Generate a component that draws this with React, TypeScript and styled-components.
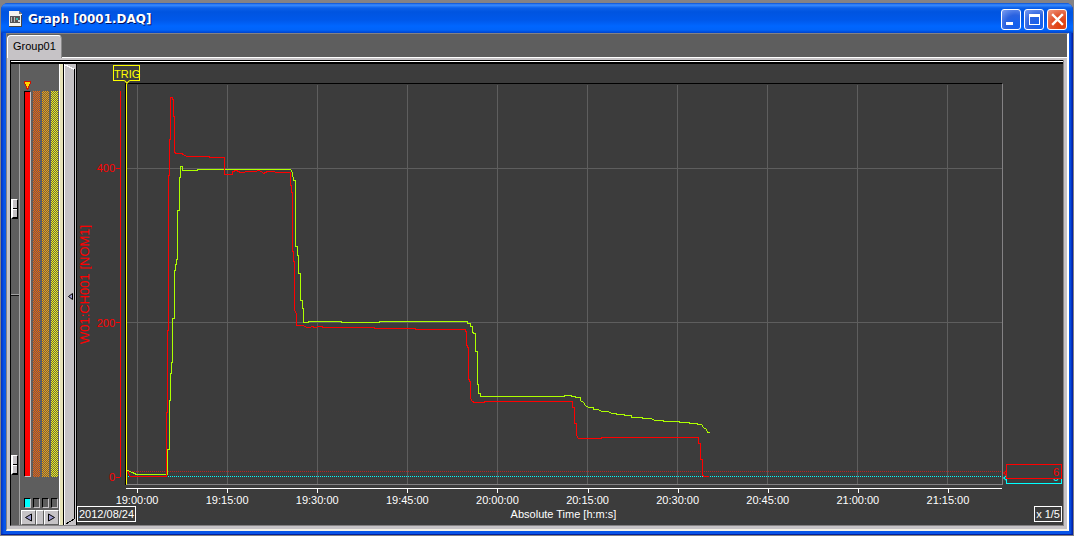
import React from "react";
import styled, { createGlobalStyle } from "styled-components";

const GlobalStyle = createGlobalStyle`
  * { box-sizing: border-box; }
  body {
    margin: 0;
    background: #848284;
    font-family: "Liberation Sans", Arial, sans-serif;
    font-size: 11px;
    line-height: 14px;
  }
  button { font: inherit; padding: 0; cursor: default; }
`;

const Desktop = styled.div`
  min-height: 100vh;
  display: flex;
  padding: 3px 1px 1px 1px;
`;

const Window = styled.main`
  flex: 1;
  min-width: 0;
  display: flex;
  flex-direction: column;
  border-radius: 7px 7px 0 0;
  background: linear-gradient(to right, #0030c0 0, #0855e8 3px, #0855e8 calc(100% - 3px), #0018a0 100%);
  padding: 0 4px 4px 5px;
  box-shadow: inset 0 -1px 0 #0020a0;
`;

const TitleBar = styled.header`
  height: 30px;
  margin: 0 -4px 0 -5px;
  padding: 2px 6px 0 8px;
  border-radius: 7px 7px 0 0;
  display: flex;
  align-items: center;
  gap: 6px;
  background: linear-gradient(#0a50d0 0, #3a8cff 2px, #0a5fe8 5px, #0054e0 9px, #0058ea 17px, #0066ff 23px, #0064fa 27px, #0042c8 30px);
`;

const Title = styled.h1`
  flex: 1;
  margin: 0;
  color: #fff;
  font-family: "DejaVu Sans", Verdana, sans-serif;
  font-size: 12px;
  line-height: 18px;
  font-weight: bold;
  text-shadow: 1px 1px 0 #001060;
  white-space: nowrap;
`;

const WindowButtons = styled.div`
  display: flex;
  gap: 3px;
`;

const WindowButton = styled.button<{ $close?: boolean }>`
  width: 20px;
  height: 21px;
  border: 1px solid #fff;
  border-radius: 3px;
  display: grid;
  place-items: center;
  background: ${(p) =>
    p.$close
      ? "radial-gradient(circle at 75% 80%, #e03c08, #e2542f 50%, #ef9c85)"
      : "radial-gradient(circle at 75% 80%, #1060f0, #2a62e0 50%, #7f9ff0)"};
`;

const Client = styled.section`
  flex: 1;
  min-height: 0;
  display: flex;
  flex-direction: column;
  background: #c6c3c6;
  border: 1px solid #848284;
  border-right: 2px solid #fff;
  border-bottom: 2px solid #f4f2e8;
`;

const TabRow = styled.nav`
  height: 24px;
  display: flex;
  align-items: flex-end;
  background: #5e5e5e;
  border-bottom: 1px solid #fff;
`;

const Tab = styled.button`
  height: 23px;
  width: 55px;
  margin-bottom: -1px;
  border: 1px solid #fff;
  border-width: 1px 1px 0 1px;
  border-right-color: #8a8a8a;
  border-radius: 4px 4px 0 0;
  background: #c6c3c6;
  color: #000;
  text-align: left;
  padding: 0 0 2px 5px;
`;

const Workspace = styled.div`
  flex: 1;
  min-height: 0;
  display: flex;
  margin: 2px 3px 3px 3px;
  border-left: 1px solid #000;
  border-right: 1px solid #848284;
  border-bottom: 1px solid #848284;
  background: linear-gradient(#000 0 1px, #fff 1px 2px, #000 2px 4px, #3c3c3c 4px);
  padding-top: 4px;
`;

const Ruler = styled.div`
  width: 9px;
  display: flex;
  flex-direction: column;
  background: #5e5e5e;
  border-right: 1px solid #a0a0a0;
  padding: 135px 0 50px 0;
`;

const RulerThumb = styled.div`
  width: 7px;
  height: 20px;
  flex: none;
  border: 1px solid #fff;
  border-left-width: 2px;
  border-right-color: #000;
  border-bottom: 2px solid #000;
  background: linear-gradient(#c6c3c6 0 8px, #000 8px 9px, #fff 9px 10px, #c6c3c6 10px);
`;

const RulerSpan = styled.div<{ $grow: number; $mark?: boolean }>`
  flex: ${(p) => p.$grow};
  border-bottom: ${(p) => (p.$mark ? "1px solid #111" : "0")};
  box-shadow: ${(p) => (p.$mark ? "inset 0 -1px 0 #a0a0a0" : "none")};
`;

const Channels = styled.aside`
  width: 39px;
  display: flex;
  flex-direction: column;
  background: #5e5e5e;
`;

const Marker = styled.svg`
  display: block;
  flex: none;
  width: 7px;
  height: 9px;
  margin: 17px 0 1px 4px;
`;

const Bars = styled.div`
  flex: 1;
  display: grid;
  grid-template-columns: repeat(4, 7px);
  column-gap: 2px;
  padding-left: 4px;
`;

const Bar = styled.div<{ $color: string; $solid?: boolean }>`
  background: ${(p) =>
    p.$solid ? p.$color : `repeating-conic-gradient(${p.$color} 0 25%, #5e5e5e 0 50%) 0 0 / 2px 2px`};
  border: solid #000;
  border-width: ${(p) => (p.$solid ? "1px 1px 1px 1px" : "0")};
  border-right-color: #c6c3c6;
  border-bottom-color: #c6c3c6;
  &:nth-child(even) { background-position: 1px 0; }
`;

const Swatches = styled.div`
  display: grid;
  grid-template-columns: repeat(4, 7px);
  column-gap: 2px;
  padding: 21px 0 0 4px;
`;

const Swatch = styled.input`
  appearance: none;
  margin: 0;
  width: 7px;
  height: 10px;
  border: 1px solid #000;
  border-right-color: #c6c3c6;
  border-bottom-color: #c6c3c6;
  background: #5e5e5e;
  &:checked { background: #0ff; }
`;

const Scroller = styled.div`
  display: flex;
  margin: 2px 0 0 1px;
  height: 15px;
  background: #c6c3c6;
`;

const ScrollButton = styled.button<{ $wide?: boolean }>`
  width: ${(p) => (p.$wide ? "15px" : "8px")};
  height: 15px;
  display: grid;
  place-items: center;
  background: #c6c3c6;
  border: 1px solid #fff;
  border-right-color: #5e5e5e;
  border-bottom-color: #5e5e5e;
`;

const Divider = styled.div`
  width: 5px;
  background: linear-gradient(to right, #fff 0 1px, #e8e4b8 1px 4px, #000 4px);
`;

const Splitter = styled.button`
  width: 12px;
  border: 0;
  display: flex;
  flex-direction: column;
  justify-content: space-between;
  background: linear-gradient(to right, #fff 0 1px, #c6c3c6 1px 10px, #000 10px 11px, #c6c3c6 11px);
  svg { display: block; flex: none; }
`;

const Chart = styled.section`
  flex: 1;
  min-width: 0;
  display: flex;
  flex-direction: column;
  background: #3c3c3c;
  border-left: 1px solid #000;
  color: #fff;
  overflow: hidden;
`;

const PlotRow = styled.div`
  flex: 1;
  min-height: 0;
  display: grid;
  grid-template-columns: 20px 24px 5px minmax(0, 1fr) 60px;
  padding-top: 19px;
`;

const ChannelName = styled.div`
  writing-mode: vertical-rl;
  transform: rotate(180deg);
  color: #f00;
  font-size: 13px;
  line-height: 16px;
  width: 16px;
  text-align: center;
  white-space: nowrap;
`;

const ValueAxis = styled.div`
  display: flex;
  flex-direction: column;
  margin: 8px 0 8px 0;
  border-right: 1px solid #f00;
  color: #f00;
`;

const AxisStep = styled.div<{ $span: number }>`
  flex: ${(p) => p.$span};
  display: flex;
  align-items: flex-end;
  justify-content: flex-end;
  span {
    display: flex;
    align-items: center;
    gap: 1px;
    margin-bottom: -7px;
  }
  span::after {
    content: "";
    width: 4px;
    height: 1px;
    background: #f00;
  }
`;

const Plot = styled.div`
  grid-column: 4;
  position: relative;
  min-width: 0;
  min-height: 0;
  border: 1px solid #848284;
  border-top-color: #000;
  border-left: 1px solid #ff0;
  box-shadow: -1px 0 0 #000;
`;

const Traces = styled.svg`
  position: absolute;
  inset: 0;
  width: 100%;
  height: 100%;
  shape-rendering: crispEdges;
  fill: none;
  path { vector-effect: non-scaling-stroke; }
`;

const TriggerFlag = styled.div`
  position: absolute;
  left: -14px;
  top: -19px;
  width: 27px;
  height: 16px;
  border: 1px solid #ff0;
  color: #ff0;
  line-height: 16px;
  &::after {
    content: "";
    position: absolute;
    left: 11px;
    top: 13px;
    width: 3px;
    height: 3px;
    background: #3c3c3c;
    border: 1px solid #ff0;
    border-width: 0 1px 1px 0;
    transform: rotate(45deg);
  }
`;

const Readings = styled.div`
  display: flex;
  flex-direction: column;
  justify-content: flex-end;
  padding: 0 1px 1px 3px;
`;

const Reading = styled.output<{ $color: string; $front?: boolean }>`
  position: relative;
  z-index: ${(p) => (p.$front ? 1 : 0)};
  height: 15px;
  margin-bottom: ${(p) => (p.$front ? "-10px" : "0")};
  padding-right: 2px;
  border: 1px solid ${(p) => p.$color};
  background: #3c3c3c;
  color: ${(p) => p.$color};
  line-height: 15px;
  text-align: right;
  &::before {
    content: "";
    position: absolute;
    left: -3px;
    top: 6px;
    width: 3px;
    height: 3px;
    border: 1px solid ${(p) => p.$color};
    border-width: 0 0 1px 1px;
    transform: rotate(45deg);
  }
`;

const TimeLine = styled.div`
  height: 1px;
  margin: 3px 61px 0 49px;
  background: #fff;
`;

const TimeLabels = styled.div`
  display: grid;
  grid-template-columns: repeat(10, minmax(0, 1fr));
  padding: 0 70px 0 15px;
  margin-bottom: -1px;
`;

const TimeLabel = styled.time`
  display: flex;
  flex-direction: column;
  align-items: center;
  &::before {
    content: "";
    width: 1px;
    height: 4px;
    margin-left: 1px;
    background: #fff;
  }
`;

const Footer = styled.footer`
  display: grid;
  grid-template-columns: 1fr auto 1fr;
  padding: 0 1px 3px 0;
`;

const InfoBox = styled.div<{ $end?: boolean }>`
  justify-self: ${(p) => (p.$end ? "end" : "start")};
  height: 16px;
  padding: 0 1px;
  border: 1px solid #fff;
  line-height: 15px;
  white-space: nowrap;
`;

const AxisTitle = styled.div`
  line-height: 16px;
  margin-right: 12px;
`;

const times = [
  "19:00:00", "19:15:00", "19:30:00", "19:45:00", "20:00:00",
  "20:15:00", "20:30:00", "20:45:00", "21:00:00", "21:15:00",
];

const gridLines =
  times.map((_, i) => `M${137 + i * 90} 84V484`).join("") + "M126 168H1002M126 322H1002";

const redTrace =
  "M127 471L130 476H166V412H167V330H168V175H169V139H170V97H172L173 101V116H174V152L176 153H182V154L187 156H209V157H224V174H232V171L236 170L240 172L250 171H255L258 170L261 171L263 173L267 171H274L275 172H290V185H291V192H292V251H293V261H294V309L296 314V325H303L306 327H310L311 326L315 327L318 326H322V327H374V328H415V329H465V331H466V343L467 347H468V377L469 381H470V398L472 401L474 402H484V401H572V407H574V423H576V435L578 438H601V437H698V443H700V459H702V475L704 476H708";

const greenTrace =
  "M127 470L132 472L136 474H167V449H169V400H170V373H171V362H172V318H174V270H175V264H176V259H177V210H179V177H180V166H182V170H197V169H290L291 170L292 173L293 180H295V246H297V255H298V273H300V300H302V308H303V322H308V321H341V322H379V321H467V323H470V326H472V331L473 333H475V351H477V384H478V393H480V396H564V395H571V396H575V397H580V400L583 402L585 405L588 407H593V409H598L601 411H608L611 413H616V414H624V415H631V417H642V418H650L655 420H663V421H679V422H689V423H697V424H701L703 427L706 429L707 432H709";

function DocIcon() {
  return (
    <svg width="13" height="16" viewBox="0 0 13 16" shapeRendering="crispEdges" aria-hidden="true">
      <path d="M0 0H10L13 3V16H0Z" fill="#f4f4ee" />
      <path d="M10 0L13 3H10Z" fill="#777" />
      <path d="M12 4H13V16H0V15H12Z" fill="#444" />
      <path d="M1 5H11V12H1Z" fill="#555" />
      <path d="M2 6H3V11H2ZM5 6H6V11H5Z" fill="#b8b8b8" />
      <path d="M7 7H9V9H7Z" fill="#30c0b0" />
      <path d="M9 9H11V11H9Z" fill="#ddd" />
    </svg>
  );
}

export default function App() {
  return (
    <Desktop>
      <GlobalStyle />
      <Window>
        <TitleBar>
          <DocIcon />
          <Title>Graph [0001.DAQ]</Title>
          <WindowButtons>
            <WindowButton aria-label="Minimize">
              <svg width="18" height="19" aria-hidden="true"><path d="M4 12H11V15H4Z" fill="#fff" /></svg>
            </WindowButton>
            <WindowButton aria-label="Maximize">
              <svg width="18" height="19" shapeRendering="crispEdges" aria-hidden="true">
                <path d="M4 4H15V15H4ZM5 7V14H14V7Z" fill="#fff" fillRule="evenodd" />
              </svg>
            </WindowButton>
            <WindowButton $close aria-label="Close">
              <svg width="18" height="19" aria-hidden="true">
                <path d="M5 5L14 14M14 5L5 14" stroke="#fff" strokeWidth="2.4" strokeLinecap="square" />
              </svg>
            </WindowButton>
          </WindowButtons>
        </TitleBar>
        <Client>
          <TabRow>
            <Tab>Group01</Tab>
          </TabRow>
          <Workspace>
            <Ruler>
              <RulerThumb />
              <RulerSpan $grow={76} $mark />
              <RulerSpan $grow={160} />
              <RulerThumb />
            </Ruler>
            <Channels>
              <Marker viewBox="0 0 7 9" shapeRendering="crispEdges" aria-hidden="true">
                <path d="M0 0H7V3H6V5H5V8H4V9H3V8H2V5H1V3H0Z" fill="#d01000" />
                <path d="M1 1H6V3H5V5H4V7H3V5H2V3H1Z" fill="#ffd800" />
              </Marker>
              <Bars>
                <Bar $color="#f00" $solid />
                <Bar $color="#ff6000" />
                <Bar $color="#ffa500" />
                <Bar $color="#ff0" />
              </Bars>
              <Swatches>
                <Swatch type="checkbox" aria-label="Channel 1" defaultChecked />
                <Swatch type="checkbox" aria-label="Channel 2" />
                <Swatch type="checkbox" aria-label="Channel 3" />
                <Swatch type="checkbox" aria-label="Channel 4" />
              </Swatches>
              <Scroller>
                <ScrollButton $wide aria-label="Previous channels">
                  <svg width="9" height="9" aria-hidden="true"><path d="M1.5 4.5L7.5 1V8Z" fill="#9c9ace" stroke="#000" /></svg>
                </ScrollButton>
                <ScrollButton aria-label="Scroll position" />
                <ScrollButton $wide aria-label="Next channels">
                  <svg width="9" height="9" aria-hidden="true"><path d="M7.5 4.5L1.5 1V8Z" fill="#9c9ace" stroke="#000" /></svg>
                </ScrollButton>
              </Scroller>
            </Channels>
            <Divider />
            <Splitter aria-label="Collapse channel bar">
              <svg width="12" height="6" shapeRendering="crispEdges" aria-hidden="true">
                <path d="M1 1H3V2H5V3H7V4H9V5H10" fill="none" stroke="#fff" />
                <path d="M10 0H11V5H10Z" fill="#c6c3c6" />
              </svg>
              <svg width="12" height="12" aria-hidden="true">
                <path d="M4.5 7.5L8.5 4.5V10.5Z" fill="#9c9ace" stroke="#000" />
              </svg>
              <svg width="12" height="6" shapeRendering="crispEdges" aria-hidden="true">
                <path d="M10 0H11V6H10Z" fill="#c6c3c6" />
                <path d="M10 0L2 5" fill="none" stroke="#000" />
              </svg>
            </Splitter>
            <Chart>
              <PlotRow>
                <ChannelName>W01:CH001 [NOM1]</ChannelName>
                <ValueAxis>
                  <AxisStep $span={1}><span>400</span></AxisStep>
                  <AxisStep $span={2}><span>200</span></AxisStep>
                  <AxisStep $span={2}><span>0</span></AxisStep>
                </ValueAxis>
                <Plot>
                  <Traces viewBox="126.5 83.5 875 400" preserveAspectRatio="none" role="img" aria-label="Recorded channel traces">
                    <path d={gridLines} stroke="#5e5e5e" />
                    <path d="M127.5 471H1002" stroke="#c02020" strokeDasharray="1 1" />
                    <path d="M127.5 476H1002" stroke="#0ff" strokeDasharray="1 1" />
                    <path d={greenTrace} stroke="#adff00" />
                    <path d={redTrace} stroke="#f00" />
                  </Traces>
                  <TriggerFlag>TRIG</TriggerFlag>
                </Plot>
                <Readings>
                  <Reading $color="#f00" $front>6</Reading>
                  <Reading $color="#0ff">0</Reading>
                </Readings>
              </PlotRow>
              <TimeLine />
              <TimeLabels>
                {times.map((t) => (
                  <TimeLabel key={t}>{t}</TimeLabel>
                ))}
              </TimeLabels>
              <Footer>
                <InfoBox>2012/08/24</InfoBox>
                <AxisTitle>Absolute Time [h:m:s]</AxisTitle>
                <InfoBox $end>x 1/5</InfoBox>
              </Footer>
            </Chart>
          </Workspace>
        </Client>
      </Window>
    </Desktop>
  );
}
